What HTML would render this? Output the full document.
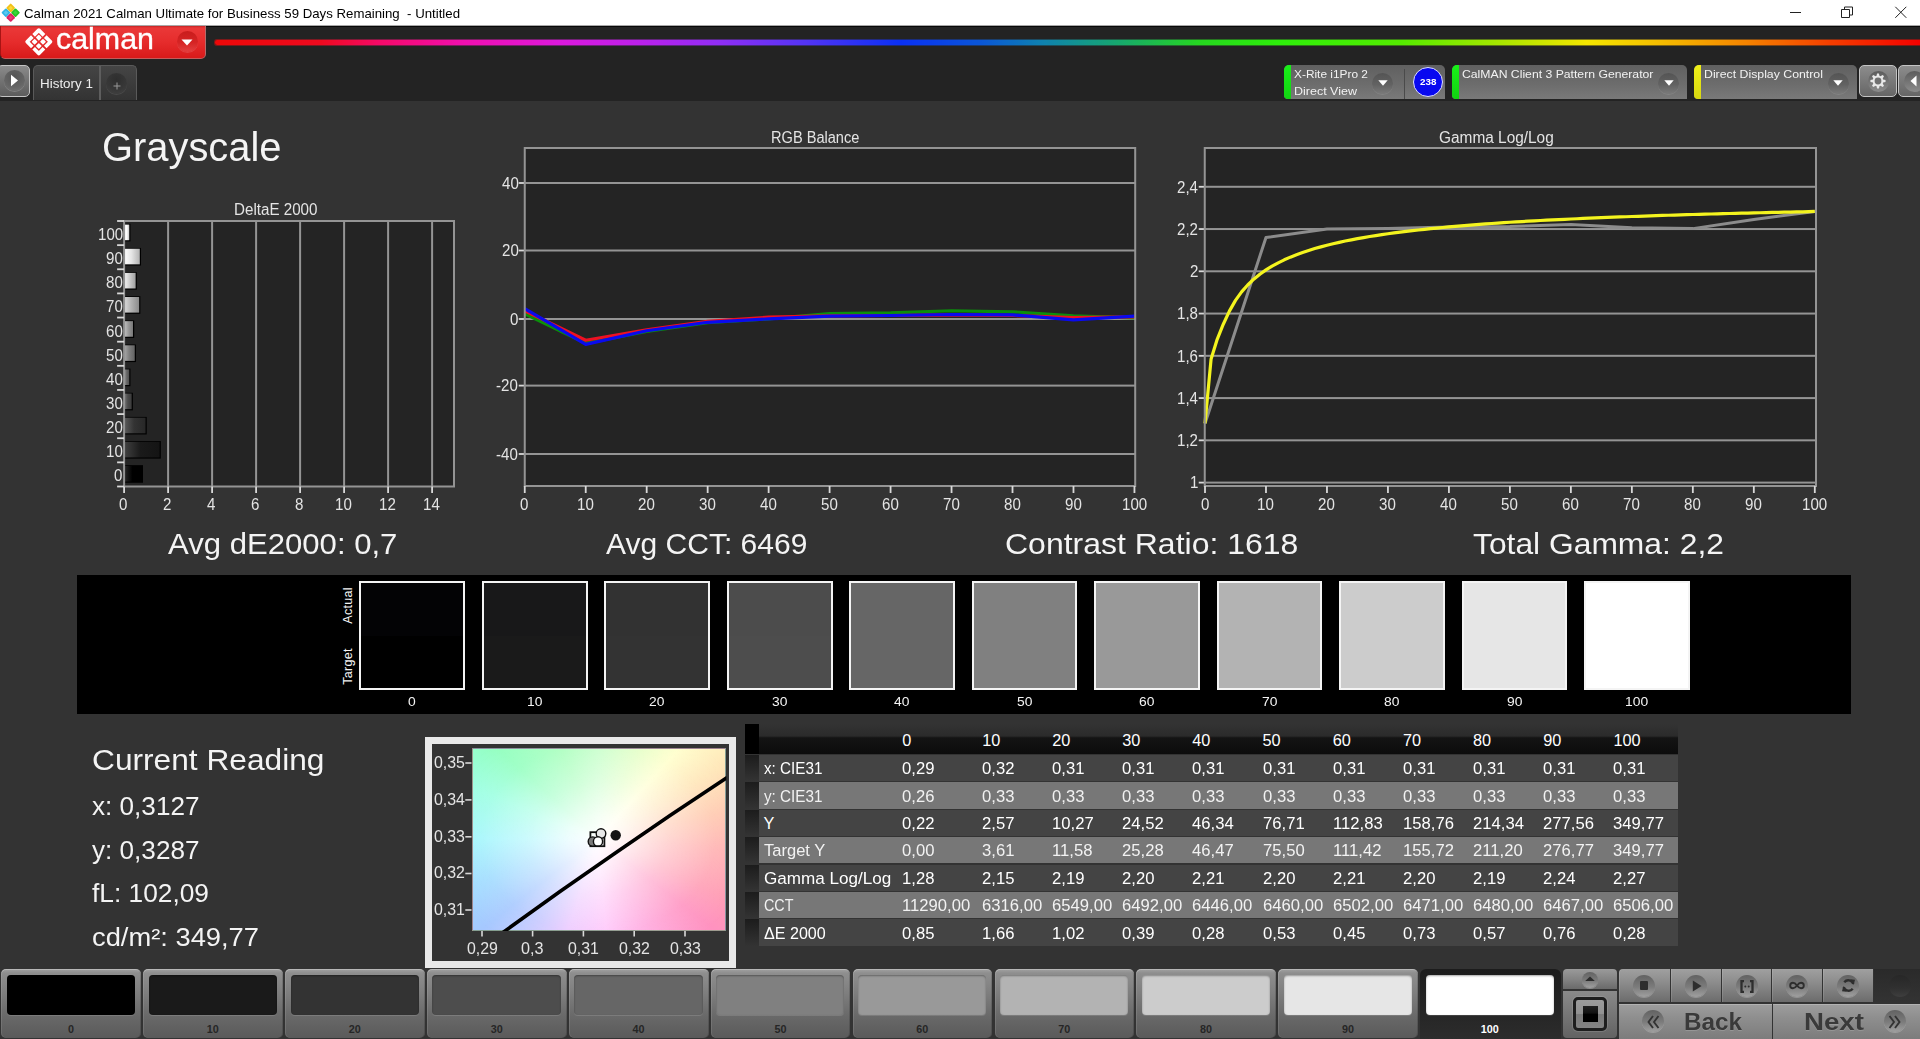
<!DOCTYPE html>
<html lang="en"><head><meta charset="utf-8"><title>Calman 2021 - Grayscale</title>
<style>
html,body{margin:0;padding:0;background:#333;}
body{width:1920px;height:1039px;overflow:hidden;position:relative;font-family:"Liberation Sans",sans-serif;}
#app{position:absolute;left:0;top:0;width:1920px;height:1039px;overflow:hidden;background:#333;}
.b{position:absolute;display:block;}
.t{position:absolute;display:block;white-space:nowrap;font-family:"Liberation Sans",sans-serif;transform-origin:0 50%;}
</style></head>
<body><div id="app">
<!-- title bar + header -->
<div class="b" style="left:0px;top:0px;width:1920px;height:25px;background:#fff;"></div>
<svg class="b" style="left:0px;top:2px" width="22" height="22" viewBox="0 0 22 22">
<g transform="translate(10.700 10.700) rotate(45) scale(1.04)">
<rect x="-6.400" y="-6.400" width="6.300" height="6.300" rx=".9" fill="#f2c218"/>
<rect x="0.100" y="-6.400" width="6.300" height="6.300" rx=".9" fill="#25c425"/>
<rect x="-6.400" y="0.100" width="6.300" height="6.300" rx=".9" fill="#32b4e6"/>
<rect x="0.100" y="0.100" width="6.300" height="6.300" rx=".9" fill="#de2362"/>
<rect x="-4.800" y="-4.800" width="3.100" height="3.100" fill="#ffe04a" opacity=".7"/>
<rect x="1.700" y="-4.800" width="3.100" height="3.100" fill="#4be04b" opacity=".6"/>
<rect x="-4.800" y="1.700" width="3.100" height="3.100" fill="#6ad2f6" opacity=".7"/>
<rect x="1.700" y="1.700" width="3.100" height="3.100" fill="#f04c86" opacity=".6"/>
</g></svg>
<span class="t" style="left:23.5px;top:6.2px;font-size:13px;line-height:16px;color:#000;transform:scaleX(1.0176);white-space:pre;">Calman 2021 Calman Ultimate for Business 59 Days Remaining  - Untitled</span>
<svg class="b" style="left:1760px;top:0" width="160" height="25" viewBox="0 0 160 25" fill="none" stroke="#222" stroke-width="1">
<path d="M30 12.5H41"/>
<path d="M81.5 9.5h8v8h-8z"/><path d="M84.5 9.5v-2.500h8v8h-3"/>
<path d="M135.300 6.800l11 11M146.300 6.800l-11 11"/>
</svg>
<div class="b" style="left:0px;top:25px;width:1920px;height:1px;background:#a8a8a8;"></div>
<div class="b" style="left:0px;top:26px;width:1920px;height:74.5px;background:#232323;border-top:1px solid #080808;box-sizing:border-box;"></div>
<div class="b" style="left:214.3px;top:39.3px;width:1712px;height:6.6px;background:linear-gradient(90deg,#f80808 0.00%,#f80a20 6.19%,#ff0a6e 9.70%,#fa10b4 14.37%,#e41ae6 20.21%,#c222f5 24.88%,#9430ff 29.56%,#5a36ff 34.23%,#0a32ff 40.07%,#0a5ae0 44.74%,#1086b8 48.25%,#18b070 52.92%,#28e020 57.59%,#30f80a 62.27%,#58f400 69.28%,#b0f000 75.12%,#fff000 80.14%,#ffc400 84.46%,#ff8c00 89.19%,#ff4000 94.39%,#ff0000 99.65%);border-radius:3px 0 0 3px;opacity:.42;"></div>
<div class="b" style="left:214.8px;top:40.2px;width:1712px;height:4.8px;background:linear-gradient(90deg,#f80808 0.00%,#f80a20 6.19%,#ff0a6e 9.70%,#fa10b4 14.37%,#e41ae6 20.21%,#c222f5 24.88%,#9430ff 29.56%,#5a36ff 34.23%,#0a32ff 40.07%,#0a5ae0 44.74%,#1086b8 48.25%,#18b070 52.92%,#28e020 57.59%,#30f80a 62.27%,#58f400 69.28%,#b0f000 75.12%,#fff000 80.14%,#ffc400 84.46%,#ff8c00 89.19%,#ff4000 94.39%,#ff0000 99.65%);border-radius:2.400px 0 0 2.400px;filter:brightness(.96);"></div>
<div class="b" style="left:0px;top:26px;width:206.3px;height:33.2px;background:linear-gradient(180deg,#c42424 0,#ea3838 6%,#e62c2c 50%,#d81a1a 100%);border-radius:0 0 5px 5px;border:1px solid #a81414;border-right-color:#b46a6a;border-bottom-color:#c45a5a;border-top:none;box-sizing:border-box;"></div>
<svg class="b" style="left:24px;top:27px" width="30" height="30" viewBox="-15 -15 30 30">
<g transform="translate(-.2 -.2) rotate(45) scale(1.16)">
<g fill="none" stroke="#fff" stroke-width="3.200" stroke-linejoin="round">
<path d="M-7.100-.8V-7.100H-.8"/><path d="M7.100-.8V-7.100H.8"/><path d="M-7.100.8V7.100H-.8"/><path d="M7.100.8V7.100H.8"/>
</g>
<g fill="#fff">
<rect x="-4.400" y="-4.400" width="3.700" height="3.700" rx=".6"/><rect x=".7" y="-4.400" width="3.700" height="3.700" rx=".6"/>
<rect x="-4.400" y=".7" width="3.700" height="3.700" rx=".6"/><rect x=".7" y=".7" width="3.700" height="3.700" rx=".6"/>
</g></g></svg>
<span class="t" style="left:55.6px;top:21px;font-size:30px;line-height:36px;color:#fff;transform:scaleX(1.0133);-webkit-text-stroke:.35px #fff;">calman</span>
<div class="b" style="left:176.5px;top:31px;width:21px;height:21px;border-radius:50%;background:linear-gradient(180deg,#c81c1c 0,#d62424 55%,#e44040 100%);box-shadow:0 1px 0 rgba(255,255,255,.14);"></div>
<svg class="b" style="left:181px;top:38.500px" width="12" height="7" viewBox="0 0 12 7"><path d="M.5.5h11L6 6.500z" fill="#fff"/></svg>
<div class="b" style="left:-3px;top:65px;width:33.3px;height:31.6px;border-radius:5px;border:1.800px solid #c4c4c4;background:linear-gradient(180deg,#8a8a8a,#5c5c5c);box-sizing:border-box;"></div>
<div class="b" style="left:4px;top:70px;width:21px;height:21px;border-radius:50%;background:radial-gradient(circle at 50% 30%,#555 0,#666 60%,#7a7a7a 100%);box-shadow:0 1px 0 rgba(255,255,255,.2);"></div>
<svg class="b" style="left:10px;top:74px" width="9" height="13" viewBox="0 0 9 13"><path d="M1 .8L8 6.500 1 12.200z" fill="#fff"/></svg>
<div class="b" style="left:33px;top:65px;width:104px;height:35px;border-radius:5px 5px 0 0;border:1px solid #5a5a5a;border-bottom:none;background:linear-gradient(180deg,#454545,#333);box-sizing:border-box;"></div>
<div class="b" style="left:99px;top:66px;width:1.5px;height:34px;background:#5e5e5e;"></div>
<span class="t" style="left:40px;top:75.5px;font-size:13.2px;line-height:16px;color:#eee;transform:scaleX(1.0177);">History 1</span>
<div class="b" style="left:106px;top:72.5px;width:21px;height:21px;border-radius:50%;background:radial-gradient(circle at 50% 30%,#2e2e2e 0,#383838 60%,#444 100%);box-shadow:0 1px 0 rgba(255,255,255,.10);"></div>
<svg class="b" style="left:112.500px;top:81.500px" width="8" height="8" viewBox="0 0 8 8"><path d="M4 .5v7M.5 4h7" stroke="#999" stroke-width="1" fill="none"/></svg>
<div class="b" style="left:1284px;top:65px;width:161px;height:34px;border-radius:5px 5px 0 4px;background:linear-gradient(180deg,#606060 0,#6c6c6c 55%,#797979 100%);overflow:hidden;"><div class="b" style="left:0;top:0;width:6.900px;height:34px;background:linear-gradient(180deg,#18f018,#12d412)"></div></div>
<div class="b" style="left:1372px;top:72.5px;width:21px;height:21px;border-radius:50%;background:linear-gradient(180deg,#545454 0,#626262 55%,#7a7a7a 100%);box-shadow:0 1px 0 rgba(255,255,255,.10);"></div>
<svg class="b" style="left:1377.5px;top:80px" width="10" height="6" viewBox="0 0 10 6"><path d="M.3.300h9.400L5 5.800z" fill="#fff"/></svg>
<div class="b" style="left:1404.3px;top:69px;width:1.2px;height:30px;background:#4a4a4a;"></div>
<span class="t" style="left:1293.5px;top:67.4px;font-size:11.6px;line-height:14px;color:#f2f2f2;transform:scaleX(1.0248);">X-Rite i1Pro 2</span>
<span class="t" style="left:1293.5px;top:84.2px;font-size:11.6px;line-height:14px;color:#f2f2f2;transform:scaleX(1.0779);">Direct View</span>
<div class="b" style="left:1413px;top:67px;width:30px;height:30px;border-radius:50%;background:#0808f0;border:1.900px solid #dedeff;box-sizing:border-box;"></div>
<span class="t" style="left:1419.8px;top:76.1px;font-size:9.8px;line-height:12px;color:#fff;transform:scaleX(1.0030);font-weight:bold;">238</span>
<div class="b" style="left:1452px;top:65px;width:235px;height:34px;border-radius:5px 5px 0 4px;background:linear-gradient(180deg,#606060 0,#6c6c6c 55%,#797979 100%);overflow:hidden;"><div class="b" style="left:0;top:0;width:6.900px;height:34px;background:linear-gradient(180deg,#18f018,#12d412)"></div></div>
<div class="b" style="left:1658.2px;top:72.5px;width:21px;height:21px;border-radius:50%;background:linear-gradient(180deg,#545454 0,#626262 55%,#7a7a7a 100%);box-shadow:0 1px 0 rgba(255,255,255,.10);"></div>
<svg class="b" style="left:1663.7px;top:80px" width="10" height="6" viewBox="0 0 10 6"><path d="M.3.300h9.400L5 5.800z" fill="#fff"/></svg>
<span class="t" style="left:1462.3px;top:67.4px;font-size:11.6px;line-height:14px;color:#f2f2f2;transform:scaleX(1.0533);">CalMAN Client 3 Pattern Generator</span>
<div class="b" style="left:1694px;top:65px;width:162.5px;height:34px;border-radius:5px 5px 0 4px;background:linear-gradient(180deg,#606060 0,#6c6c6c 55%,#797979 100%);overflow:hidden;"><div class="b" style="left:0;top:0;width:6.900px;height:34px;background:linear-gradient(180deg,#f0f018,#d8d810)"></div></div>
<div class="b" style="left:1827.5px;top:72.5px;width:21px;height:21px;border-radius:50%;background:linear-gradient(180deg,#545454 0,#626262 55%,#7a7a7a 100%);box-shadow:0 1px 0 rgba(255,255,255,.10);"></div>
<svg class="b" style="left:1833.0px;top:80px" width="10" height="6" viewBox="0 0 10 6"><path d="M.3.300h9.400L5 5.800z" fill="#fff"/></svg>
<span class="t" style="left:1704.3px;top:67.4px;font-size:11.6px;line-height:14px;color:#f2f2f2;transform:scaleX(1.0609);">Direct Display Control</span>
<div class="b" style="left:1859.3px;top:65px;width:37.7px;height:32px;border-radius:5px;border:1.5px solid #c4c4c4;background:linear-gradient(180deg,#8c8c8c,#666);box-sizing:border-box;"></div>
<div class="b" style="left:1867.9px;top:70.5px;width:21px;height:21px;border-radius:50%;background:linear-gradient(180deg,#5c5c5c,#8c8c8c);"></div>
<svg class="b" style="left:1870.400px;top:73px" width="16" height="16" viewBox="-8 -8 16 16"><polygon points="-1.57,-5.06 -0.91,-7.55 0.91,-7.55 1.57,-5.06 2.47,-4.69 4.69,-5.98 5.98,-4.69 4.69,-2.47 5.06,-1.57 7.55,-0.91 7.55,0.91 5.06,1.57 4.69,2.47 5.98,4.69 4.69,5.98 2.47,4.69 1.57,5.06 0.91,7.55 -0.91,7.55 -1.57,5.06 -2.47,4.69 -4.69,5.98 -5.98,4.69 -4.69,2.47 -5.06,1.57 -7.55,0.91 -7.55,-0.91 -5.06,-1.57 -4.69,-2.47 -5.98,-4.69 -4.69,-5.98 -2.47,-4.69" fill="#e8e8e8"/><circle r="5.100" fill="#e8e8e8"/><circle r="3.400" fill="#707070"/></svg>
<div class="b" style="left:1898.4px;top:65px;width:30px;height:32px;border-radius:5px;border:1.5px solid #c4c4c4;background:linear-gradient(180deg,#8c8c8c,#666);box-sizing:border-box;"></div>
<div class="b" style="left:1904.4px;top:70.5px;width:21px;height:21px;border-radius:50%;background:linear-gradient(180deg,#5c5c5c,#8c8c8c);"></div>
<svg class="b" style="left:1910px;top:74.500px" width="7" height="12" viewBox="0 0 7 12"><path d="M6.500.5v11L.5 6z" fill="#fff"/></svg>
<!-- charts -->
<span class="t" style="left:101.5px;top:123.3px;font-size:40.4px;line-height:49px;color:#f4f4f4;transform:scaleX(0.9870);">Grayscale</span>
<svg class="b" style="left:100px;top:200px" width="380" height="300" viewBox="100 200 380 300"><defs><linearGradient id="bg100" x1="0" x2="1" y1="0" y2="0"><stop offset="0" stop-color="rgb(255,255,255)"/><stop offset=".45" stop-color="rgb(255,255,255)"/><stop offset="1" stop-color="rgb(198,198,198)"/></linearGradient><linearGradient id="bg90" x1="0" x2="1" y1="0" y2="0"><stop offset="0" stop-color="rgb(255,255,255)"/><stop offset=".45" stop-color="rgb(229,229,229)"/><stop offset="1" stop-color="rgb(178,178,178)"/></linearGradient><linearGradient id="bg80" x1="0" x2="1" y1="0" y2="0"><stop offset="0" stop-color="rgb(242,242,242)"/><stop offset=".45" stop-color="rgb(204,204,204)"/><stop offset="1" stop-color="rgb(159,159,159)"/></linearGradient><linearGradient id="bg70" x1="0" x2="1" y1="0" y2="0"><stop offset="0" stop-color="rgb(216,216,216)"/><stop offset=".45" stop-color="rgb(178,178,178)"/><stop offset="1" stop-color="rgb(138,138,138)"/></linearGradient><linearGradient id="bg60" x1="0" x2="1" y1="0" y2="0"><stop offset="0" stop-color="rgb(191,191,191)"/><stop offset=".45" stop-color="rgb(153,153,153)"/><stop offset="1" stop-color="rgb(119,119,119)"/></linearGradient><linearGradient id="bg50" x1="0" x2="1" y1="0" y2="0"><stop offset="0" stop-color="rgb(165,165,165)"/><stop offset=".45" stop-color="rgb(127,127,127)"/><stop offset="1" stop-color="rgb(99,99,99)"/></linearGradient><linearGradient id="bg40" x1="0" x2="1" y1="0" y2="0"><stop offset="0" stop-color="rgb(140,140,140)"/><stop offset=".45" stop-color="rgb(102,102,102)"/><stop offset="1" stop-color="rgb(79,79,79)"/></linearGradient><linearGradient id="bg30" x1="0" x2="1" y1="0" y2="0"><stop offset="0" stop-color="rgb(114,114,114)"/><stop offset=".45" stop-color="rgb(76,76,76)"/><stop offset="1" stop-color="rgb(59,59,59)"/></linearGradient><linearGradient id="bg20" x1="0" x2="1" y1="0" y2="0"><stop offset="0" stop-color="rgb(89,89,89)"/><stop offset=".45" stop-color="rgb(51,51,51)"/><stop offset="1" stop-color="rgb(39,39,39)"/></linearGradient><linearGradient id="bg10" x1="0" x2="1" y1="0" y2="0"><stop offset="0" stop-color="rgb(64,64,64)"/><stop offset=".45" stop-color="rgb(26,26,26)"/><stop offset="1" stop-color="rgb(20,20,20)"/></linearGradient><linearGradient id="bg0" x1="0" x2="1" y1="0" y2="0"><stop offset="0" stop-color="rgb(38,38,38)"/><stop offset=".45" stop-color="rgb(0,0,0)"/><stop offset="1" stop-color="rgb(0,0,0)"/></linearGradient></defs><rect x="124.1" y="221.0" width="329.9" height="265.5" fill="#242424"/><rect x="167.10" y="221.0" width="2" height="265.5" fill="#949494"/><rect x="211.10" y="221.0" width="2" height="265.5" fill="#949494"/><rect x="255.10" y="221.0" width="2" height="265.5" fill="#949494"/><rect x="299.10" y="221.0" width="2" height="265.5" fill="#949494"/><rect x="343.10" y="221.0" width="2" height="265.5" fill="#949494"/><rect x="387.10" y="221.0" width="2" height="265.5" fill="#949494"/><rect x="431.10" y="221.0" width="2" height="265.5" fill="#949494"/><rect x="124.70" y="223.80" width="5.76" height="17.6" fill="#000"/><rect x="124.70" y="224.60" width="4.56" height="15.6" fill="url(#bg100)"/><rect x="124.70" y="247.94" width="16.32" height="17.6" fill="#000"/><rect x="124.70" y="248.74" width="15.12" height="15.6" fill="url(#bg90)"/><rect x="124.70" y="272.07" width="12.14" height="17.6" fill="#000"/><rect x="124.70" y="272.87" width="10.94" height="15.6" fill="url(#bg80)"/><rect x="124.70" y="296.21" width="15.66" height="17.6" fill="#000"/><rect x="124.70" y="297.01" width="14.46" height="15.6" fill="url(#bg70)"/><rect x="124.70" y="320.35" width="9.50" height="17.6" fill="#000"/><rect x="124.70" y="321.15" width="8.30" height="15.6" fill="url(#bg60)"/><rect x="124.70" y="344.48" width="11.26" height="17.6" fill="#000"/><rect x="124.70" y="345.28" width="10.06" height="15.6" fill="url(#bg50)"/><rect x="124.70" y="368.62" width="5.76" height="17.6" fill="#000"/><rect x="124.70" y="369.42" width="4.56" height="15.6" fill="url(#bg40)"/><rect x="124.70" y="392.75" width="8.18" height="17.6" fill="#000"/><rect x="124.70" y="393.55" width="6.98" height="15.6" fill="url(#bg30)"/><rect x="124.70" y="416.89" width="22.04" height="17.6" fill="#000"/><rect x="124.70" y="417.69" width="20.84" height="15.6" fill="url(#bg20)"/><rect x="124.70" y="441.03" width="36.12" height="17.6" fill="#000"/><rect x="124.70" y="441.83" width="34.92" height="15.6" fill="url(#bg10)"/><rect x="124.70" y="465.16" width="18.30" height="17.6" fill="#000"/><rect x="124.70" y="465.96" width="17.10" height="15.6" fill="url(#bg0)"/><path d="M124.1 221.0H454.0V486.5H124.1Z" fill="none" stroke="#949494" stroke-width="2"/><rect x="117.1" y="220.10" width="7" height="1.800" fill="#d8d8d8"/><rect x="117.1" y="244.24" width="7" height="1.800" fill="#d8d8d8"/><rect x="117.1" y="268.37" width="7" height="1.800" fill="#d8d8d8"/><rect x="117.1" y="292.51" width="7" height="1.800" fill="#d8d8d8"/><rect x="117.1" y="316.65" width="7" height="1.800" fill="#d8d8d8"/><rect x="117.1" y="340.78" width="7" height="1.800" fill="#d8d8d8"/><rect x="117.1" y="364.92" width="7" height="1.800" fill="#d8d8d8"/><rect x="117.1" y="389.05" width="7" height="1.800" fill="#d8d8d8"/><rect x="117.1" y="413.19" width="7" height="1.800" fill="#d8d8d8"/><rect x="117.1" y="437.33" width="7" height="1.800" fill="#d8d8d8"/><rect x="117.1" y="461.46" width="7" height="1.800" fill="#d8d8d8"/><rect x="117.1" y="485.60" width="7" height="1.800" fill="#d8d8d8"/><rect x="123.20" y="486.5" width="1.800" height="6.500" fill="#d8d8d8"/><rect x="167.20" y="486.5" width="1.800" height="6.500" fill="#d8d8d8"/><rect x="211.20" y="486.5" width="1.800" height="6.500" fill="#d8d8d8"/><rect x="255.20" y="486.5" width="1.800" height="6.500" fill="#d8d8d8"/><rect x="299.20" y="486.5" width="1.800" height="6.500" fill="#d8d8d8"/><rect x="343.20" y="486.5" width="1.800" height="6.500" fill="#d8d8d8"/><rect x="387.20" y="486.5" width="1.800" height="6.500" fill="#d8d8d8"/><rect x="431.20" y="486.5" width="1.800" height="6.500" fill="#d8d8d8"/></svg>
<span class="t" style="left:97.61px;top:224.97px;font-size:15.7px;line-height:19px;color:#e4e4e4;transform:scaleX(0.9618);">100</span>
<span class="t" style="left:106px;top:249.1px;font-size:15.7px;line-height:19px;color:#e4e4e4;transform:scaleX(0.9618);">90</span>
<span class="t" style="left:106px;top:273.24px;font-size:15.7px;line-height:19px;color:#e4e4e4;transform:scaleX(0.9618);">80</span>
<span class="t" style="left:106px;top:297.38px;font-size:15.7px;line-height:19px;color:#e4e4e4;transform:scaleX(0.9618);">70</span>
<span class="t" style="left:106px;top:321.51px;font-size:15.7px;line-height:19px;color:#e4e4e4;transform:scaleX(0.9618);">60</span>
<span class="t" style="left:106px;top:345.65px;font-size:15.7px;line-height:19px;color:#e4e4e4;transform:scaleX(0.9618);">50</span>
<span class="t" style="left:106px;top:369.79px;font-size:15.7px;line-height:19px;color:#e4e4e4;transform:scaleX(0.9618);">40</span>
<span class="t" style="left:106px;top:393.92px;font-size:15.7px;line-height:19px;color:#e4e4e4;transform:scaleX(0.9618);">30</span>
<span class="t" style="left:106px;top:418.06px;font-size:15.7px;line-height:19px;color:#e4e4e4;transform:scaleX(0.9618);">20</span>
<span class="t" style="left:106px;top:442.2px;font-size:15.7px;line-height:19px;color:#e4e4e4;transform:scaleX(0.9618);">10</span>
<span class="t" style="left:114.4px;top:466.33px;font-size:15.7px;line-height:19px;color:#e4e4e4;transform:scaleX(0.9618);">0</span>
<span class="t" style="left:119.4px;top:495.2px;font-size:15.7px;line-height:19px;color:#e4e4e4;transform:scaleX(0.9618);">0</span>
<span class="t" style="left:163.4px;top:495.2px;font-size:15.7px;line-height:19px;color:#e4e4e4;transform:scaleX(0.9618);">2</span>
<span class="t" style="left:207.4px;top:495.2px;font-size:15.7px;line-height:19px;color:#e4e4e4;transform:scaleX(0.9618);">4</span>
<span class="t" style="left:251.4px;top:495.2px;font-size:15.7px;line-height:19px;color:#e4e4e4;transform:scaleX(0.9618);">6</span>
<span class="t" style="left:295.4px;top:495.2px;font-size:15.7px;line-height:19px;color:#e4e4e4;transform:scaleX(0.9618);">8</span>
<span class="t" style="left:335.2px;top:495.2px;font-size:15.7px;line-height:19px;color:#e4e4e4;transform:scaleX(0.9618);">10</span>
<span class="t" style="left:379.2px;top:495.2px;font-size:15.7px;line-height:19px;color:#e4e4e4;transform:scaleX(0.9618);">12</span>
<span class="t" style="left:423.2px;top:495.2px;font-size:15.7px;line-height:19px;color:#e4e4e4;transform:scaleX(0.9618);">14</span>
<span class="t" style="left:234.25px;top:200.2px;font-size:15.6px;line-height:19px;color:#e4e4e4;transform:scaleX(0.9725);">DeltaE 2000</span>
<svg class="b" style="left:495px;top:140px" width="660" height="360" viewBox="495 140 660 360"><rect x="524.75" y="148.0" width="610.5" height="338.0" fill="#242424"/><rect x="524.75" y="182.00" width="610.5" height="2" fill="#949494"/><rect x="518.75" y="182.10" width="6" height="1.800" fill="#d8d8d8"/><rect x="524.75" y="249.50" width="610.5" height="2" fill="#949494"/><rect x="518.75" y="249.60" width="6" height="1.800" fill="#d8d8d8"/><rect x="524.75" y="318.00" width="610.5" height="2" fill="#949494"/><rect x="518.75" y="318.10" width="6" height="1.800" fill="#d8d8d8"/><rect x="524.75" y="384.60" width="610.5" height="2" fill="#949494"/><rect x="518.75" y="384.70" width="6" height="1.800" fill="#d8d8d8"/><rect x="524.75" y="453.00" width="610.5" height="2" fill="#949494"/><rect x="518.75" y="453.10" width="6" height="1.800" fill="#d8d8d8"/><polyline points="524.75,313.81 585.72,343.31 646.69,331.44 707.66,322.63 768.63,318.90 829.60,313.48 890.57,312.80 951.54,310.76 1012.51,311.78 1073.48,315.85 1134.45,317.88" fill="none" stroke="#0b8f0b" stroke-width="3.200" stroke-linejoin="round"/><polyline points="524.75,310.76 585.72,340.26 646.69,329.75 707.66,321.27 768.63,317.20 829.60,315.85 890.57,315.51 951.54,314.83 1012.51,315.51 1073.48,317.54 1134.45,316.87" fill="none" stroke="#ee1122" stroke-width="3.200" stroke-linejoin="round"/><polyline points="524.75,308.73 585.72,344.32 646.69,330.76 707.66,322.29 768.63,318.90 829.60,316.19 890.57,315.51 951.54,314.49 1012.51,314.83 1073.48,319.92 1134.45,316.19" fill="none" stroke="#0a0aee" stroke-width="3.200" stroke-linejoin="round"/><path d="M524.75 148.0H1135.20V486.0H524.75Z" fill="none" stroke="#949494" stroke-width="2"/><rect x="523.85" y="486.0" width="1.800" height="7" fill="#d8d8d8"/><rect x="584.82" y="486.0" width="1.800" height="7" fill="#d8d8d8"/><rect x="645.79" y="486.0" width="1.800" height="7" fill="#d8d8d8"/><rect x="706.76" y="486.0" width="1.800" height="7" fill="#d8d8d8"/><rect x="767.73" y="486.0" width="1.800" height="7" fill="#d8d8d8"/><rect x="828.70" y="486.0" width="1.800" height="7" fill="#d8d8d8"/><rect x="889.67" y="486.0" width="1.800" height="7" fill="#d8d8d8"/><rect x="950.64" y="486.0" width="1.800" height="7" fill="#d8d8d8"/><rect x="1011.61" y="486.0" width="1.800" height="7" fill="#d8d8d8"/><rect x="1072.58" y="486.0" width="1.800" height="7" fill="#d8d8d8"/><rect x="1133.55" y="486.0" width="1.800" height="7" fill="#d8d8d8"/></svg>
<span class="t" style="left:501.5px;top:173.5px;font-size:15.7px;line-height:19px;color:#e4e4e4;transform:scaleX(0.9618);">40</span>
<span class="t" style="left:501.5px;top:241px;font-size:15.7px;line-height:19px;color:#e4e4e4;transform:scaleX(0.9618);">20</span>
<span class="t" style="left:509.9px;top:309.5px;font-size:15.7px;line-height:19px;color:#e4e4e4;transform:scaleX(0.9618);">0</span>
<span class="t" style="left:496.47px;top:376.1px;font-size:15.7px;line-height:19px;color:#e4e4e4;transform:scaleX(0.9618);">-20</span>
<span class="t" style="left:496.47px;top:444.5px;font-size:15.7px;line-height:19px;color:#e4e4e4;transform:scaleX(0.9618);">-40</span>
<span class="t" style="left:520.25px;top:495.2px;font-size:15.7px;line-height:19px;color:#e4e4e4;transform:scaleX(0.9618);">0</span>
<span class="t" style="left:577.02px;top:495.2px;font-size:15.7px;line-height:19px;color:#e4e4e4;transform:scaleX(0.9618);">10</span>
<span class="t" style="left:637.99px;top:495.2px;font-size:15.7px;line-height:19px;color:#e4e4e4;transform:scaleX(0.9618);">20</span>
<span class="t" style="left:698.96px;top:495.2px;font-size:15.7px;line-height:19px;color:#e4e4e4;transform:scaleX(0.9618);">30</span>
<span class="t" style="left:759.93px;top:495.2px;font-size:15.7px;line-height:19px;color:#e4e4e4;transform:scaleX(0.9618);">40</span>
<span class="t" style="left:820.9px;top:495.2px;font-size:15.7px;line-height:19px;color:#e4e4e4;transform:scaleX(0.9618);">50</span>
<span class="t" style="left:881.87px;top:495.2px;font-size:15.7px;line-height:19px;color:#e4e4e4;transform:scaleX(0.9618);">60</span>
<span class="t" style="left:942.84px;top:495.2px;font-size:15.7px;line-height:19px;color:#e4e4e4;transform:scaleX(0.9618);">70</span>
<span class="t" style="left:1003.81px;top:495.2px;font-size:15.7px;line-height:19px;color:#e4e4e4;transform:scaleX(0.9618);">80</span>
<span class="t" style="left:1064.78px;top:495.2px;font-size:15.7px;line-height:19px;color:#e4e4e4;transform:scaleX(0.9618);">90</span>
<span class="t" style="left:1121.55px;top:495.2px;font-size:15.7px;line-height:19px;color:#e4e4e4;transform:scaleX(0.9618);">100</span>
<span class="t" style="left:771.2px;top:128.2px;font-size:15.6px;line-height:19px;color:#e4e4e4;transform:scaleX(0.9353);">RGB Balance</span>
<svg class="b" style="left:1170px;top:140px" width="670" height="360" viewBox="1170 140 670 360"><rect x="1204.75" y="148.0" width="611.2" height="338.0" fill="#242424"/><rect x="1204.75" y="481.60" width="611.2" height="2" fill="#949494"/><rect x="1198.75" y="481.70" width="6" height="1.800" fill="#d8d8d8"/><rect x="1204.75" y="439.34" width="611.2" height="2" fill="#949494"/><rect x="1198.75" y="439.44" width="6" height="1.800" fill="#d8d8d8"/><rect x="1204.75" y="397.08" width="611.2" height="2" fill="#949494"/><rect x="1198.75" y="397.18" width="6" height="1.800" fill="#d8d8d8"/><rect x="1204.75" y="354.82" width="611.2" height="2" fill="#949494"/><rect x="1198.75" y="354.92" width="6" height="1.800" fill="#d8d8d8"/><rect x="1204.75" y="312.56" width="611.2" height="2" fill="#949494"/><rect x="1198.75" y="312.66" width="6" height="1.800" fill="#d8d8d8"/><rect x="1204.75" y="270.30" width="611.2" height="2" fill="#949494"/><rect x="1198.75" y="270.40" width="6" height="1.800" fill="#d8d8d8"/><rect x="1204.75" y="228.04" width="611.2" height="2" fill="#949494"/><rect x="1198.75" y="228.14" width="6" height="1.800" fill="#d8d8d8"/><rect x="1204.75" y="185.78" width="611.2" height="2" fill="#949494"/><rect x="1198.75" y="185.88" width="6" height="1.800" fill="#d8d8d8"/><polyline points="1205.00,423.44 1265.98,237.49 1326.96,229.04 1387.94,228.62 1448.92,226.93 1509.90,226.50 1570.88,224.39 1631.86,227.77 1692.84,228.62 1753.82,219.53 1814.80,211.50" fill="none" stroke="#8c8c8c" stroke-width="3" stroke-linejoin="round"/><polyline points="1205.00,423.44 1211.10,358.90 1217.20,339.28 1223.29,324.22 1229.39,311.15 1235.49,300.38 1241.59,291.90 1247.69,284.97 1253.78,279.16 1259.88,274.21 1265.98,269.92 1272.08,266.16 1278.18,262.82 1284.27,259.83 1290.37,257.14 1296.47,254.71 1302.57,252.48 1308.67,250.45 1314.76,248.57 1320.86,246.84 1326.96,245.23 1333.06,243.73 1339.16,242.34 1345.25,241.03 1351.35,239.81 1357.45,238.65 1363.55,237.57 1369.65,236.54 1375.74,235.57 1381.84,234.65 1387.94,233.78 1394.04,232.94 1400.14,232.15 1406.23,231.40 1412.33,230.67 1418.43,229.98 1424.53,229.32 1430.63,228.69 1436.72,228.08 1442.82,227.49 1448.92,226.93 1455.02,226.39 1461.12,225.86 1467.21,225.36 1473.31,224.87 1479.41,224.40 1485.51,223.95 1491.61,223.51 1497.70,223.08 1503.80,222.67 1509.90,222.27 1516.00,221.90 1522.10,221.54 1528.19,221.19 1534.29,220.85 1540.39,220.52 1546.49,220.20 1552.59,219.89 1558.68,219.59 1564.78,219.29 1570.88,219.01 1576.98,218.73 1583.08,218.46 1589.17,218.19 1595.27,217.93 1601.37,217.68 1607.47,217.43 1613.57,217.19 1619.66,216.96 1625.76,216.73 1631.86,216.51 1637.96,216.29 1644.06,216.07 1650.15,215.86 1656.25,215.66 1662.35,215.46 1668.45,215.26 1674.55,215.07 1680.64,214.88 1686.74,214.70 1692.84,214.52 1698.94,214.34 1705.04,214.17 1711.13,214.00 1717.23,213.83 1723.33,213.67 1729.43,213.50 1735.53,213.35 1741.62,213.19 1747.72,213.04 1753.82,212.89 1759.92,212.74 1766.02,212.60 1772.11,212.46 1778.21,212.32 1784.31,212.18 1790.41,212.04 1796.51,211.91 1802.60,211.78 1808.70,211.65 1814.80,211.40" fill="none" stroke="#f4f41e" stroke-width="3.200" stroke-linejoin="round"/><path d="M1204.75 148.0H1816.00V486.0H1204.75Z" fill="none" stroke="#949494" stroke-width="2"/><rect x="1204.10" y="486.0" width="1.800" height="7" fill="#d8d8d8"/><rect x="1265.08" y="486.0" width="1.800" height="7" fill="#d8d8d8"/><rect x="1326.06" y="486.0" width="1.800" height="7" fill="#d8d8d8"/><rect x="1387.04" y="486.0" width="1.800" height="7" fill="#d8d8d8"/><rect x="1448.02" y="486.0" width="1.800" height="7" fill="#d8d8d8"/><rect x="1509.00" y="486.0" width="1.800" height="7" fill="#d8d8d8"/><rect x="1569.98" y="486.0" width="1.800" height="7" fill="#d8d8d8"/><rect x="1630.96" y="486.0" width="1.800" height="7" fill="#d8d8d8"/><rect x="1691.94" y="486.0" width="1.800" height="7" fill="#d8d8d8"/><rect x="1752.92" y="486.0" width="1.800" height="7" fill="#d8d8d8"/><rect x="1813.90" y="486.0" width="1.800" height="7" fill="#d8d8d8"/></svg>
<span class="t" style="left:1189.9px;top:473.4px;font-size:15.7px;line-height:19px;color:#e4e4e4;transform:scaleX(0.9618);">1</span>
<span class="t" style="left:1177.31px;top:431.14px;font-size:15.7px;line-height:19px;color:#e4e4e4;transform:scaleX(0.9618);">1,2</span>
<span class="t" style="left:1177.31px;top:388.88px;font-size:15.7px;line-height:19px;color:#e4e4e4;transform:scaleX(0.9618);">1,4</span>
<span class="t" style="left:1177.31px;top:346.62px;font-size:15.7px;line-height:19px;color:#e4e4e4;transform:scaleX(0.9618);">1,6</span>
<span class="t" style="left:1177.31px;top:304.36px;font-size:15.7px;line-height:19px;color:#e4e4e4;transform:scaleX(0.9618);">1,8</span>
<span class="t" style="left:1189.9px;top:262.1px;font-size:15.7px;line-height:19px;color:#e4e4e4;transform:scaleX(0.9618);">2</span>
<span class="t" style="left:1177.31px;top:219.84px;font-size:15.7px;line-height:19px;color:#e4e4e4;transform:scaleX(0.9618);">2,2</span>
<span class="t" style="left:1177.31px;top:177.58px;font-size:15.7px;line-height:19px;color:#e4e4e4;transform:scaleX(0.9618);">2,4</span>
<span class="t" style="left:1200.5px;top:495.2px;font-size:15.7px;line-height:19px;color:#e4e4e4;transform:scaleX(0.9618);">0</span>
<span class="t" style="left:1257.28px;top:495.2px;font-size:15.7px;line-height:19px;color:#e4e4e4;transform:scaleX(0.9618);">10</span>
<span class="t" style="left:1318.26px;top:495.2px;font-size:15.7px;line-height:19px;color:#e4e4e4;transform:scaleX(0.9618);">20</span>
<span class="t" style="left:1379.24px;top:495.2px;font-size:15.7px;line-height:19px;color:#e4e4e4;transform:scaleX(0.9618);">30</span>
<span class="t" style="left:1440.22px;top:495.2px;font-size:15.7px;line-height:19px;color:#e4e4e4;transform:scaleX(0.9618);">40</span>
<span class="t" style="left:1501.2px;top:495.2px;font-size:15.7px;line-height:19px;color:#e4e4e4;transform:scaleX(0.9618);">50</span>
<span class="t" style="left:1562.18px;top:495.2px;font-size:15.7px;line-height:19px;color:#e4e4e4;transform:scaleX(0.9618);">60</span>
<span class="t" style="left:1623.16px;top:495.2px;font-size:15.7px;line-height:19px;color:#e4e4e4;transform:scaleX(0.9618);">70</span>
<span class="t" style="left:1684.14px;top:495.2px;font-size:15.7px;line-height:19px;color:#e4e4e4;transform:scaleX(0.9618);">80</span>
<span class="t" style="left:1745.12px;top:495.2px;font-size:15.7px;line-height:19px;color:#e4e4e4;transform:scaleX(0.9618);">90</span>
<span class="t" style="left:1801.9px;top:495.2px;font-size:15.7px;line-height:19px;color:#e4e4e4;transform:scaleX(0.9618);">100</span>
<span class="t" style="left:1439px;top:128.2px;font-size:15.6px;line-height:19px;color:#e4e4e4;transform:scaleX(0.9879);">Gamma Log/Log</span>
<span class="t" style="left:168px;top:525.7px;font-size:29.2px;line-height:36px;color:#f4f4f4;transform:scaleX(1.0655);">Avg dE2000: 0,7</span>
<span class="t" style="left:606px;top:525.7px;font-size:29.2px;line-height:36px;color:#f4f4f4;transform:scaleX(1.0288);">Avg CCT: 6469</span>
<span class="t" style="left:1005px;top:525.7px;font-size:29.2px;line-height:36px;color:#f4f4f4;transform:scaleX(1.0959);">Contrast Ratio: 1618</span>
<span class="t" style="left:1472.5px;top:525.7px;font-size:29.2px;line-height:36px;color:#f4f4f4;transform:scaleX(1.0892);">Total Gamma: 2,2</span>
<!-- swatches, reading, CIE, table -->
<div class="b" style="left:77px;top:574.5px;width:1774.3px;height:139.8px;background:#000;"></div>
<div class="b" style="left:359.3px;top:581.3px;width:105.8px;height:108.8px;border:2px solid #f4f4f4;box-sizing:border-box;background:linear-gradient(180deg,#030305 0,#030305 50.5%,#000000 50.5%,#000000 100%);"></div>
<span class="t" style="left:408.35px;top:693.6px;font-size:12.6px;line-height:16px;color:#f4f4f4;transform:scaleX(1.1000);">0</span>
<div class="b" style="left:481.78px;top:581.3px;width:105.8px;height:108.8px;border:2px solid #f4f4f4;box-sizing:border-box;background:linear-gradient(180deg,#181819 0,#181819 50.5%,#1a1a1a 50.5%,#1a1a1a 100%);"></div>
<span class="t" style="left:526.97px;top:693.6px;font-size:12.6px;line-height:16px;color:#f4f4f4;transform:scaleX(1.1000);">10</span>
<div class="b" style="left:604.26px;top:581.3px;width:105.8px;height:108.8px;border:2px solid #f4f4f4;box-sizing:border-box;background:linear-gradient(180deg,#323232 0,#323232 50.5%,#333333 50.5%,#333333 100%);"></div>
<span class="t" style="left:649.45px;top:693.6px;font-size:12.6px;line-height:16px;color:#f4f4f4;transform:scaleX(1.1000);">20</span>
<div class="b" style="left:726.74px;top:581.3px;width:105.8px;height:108.8px;border:2px solid #f4f4f4;box-sizing:border-box;background:linear-gradient(180deg,#4c4c4c 0,#4c4c4c 50.5%,#4d4d4d 50.5%,#4d4d4d 100%);"></div>
<span class="t" style="left:771.93px;top:693.6px;font-size:12.6px;line-height:16px;color:#f4f4f4;transform:scaleX(1.1000);">30</span>
<div class="b" style="left:849.22px;top:581.3px;width:105.8px;height:108.8px;border:2px solid #f4f4f4;box-sizing:border-box;background:linear-gradient(180deg,#666666 0,#666666 50.5%,#666666 50.5%,#666666 100%);"></div>
<span class="t" style="left:894.41px;top:693.6px;font-size:12.6px;line-height:16px;color:#f4f4f4;transform:scaleX(1.1000);">40</span>
<div class="b" style="left:971.7px;top:581.3px;width:105.8px;height:108.8px;border:2px solid #f4f4f4;box-sizing:border-box;background:linear-gradient(180deg,#808080 0,#808080 50.5%,#808080 50.5%,#808080 100%);"></div>
<span class="t" style="left:1016.89px;top:693.6px;font-size:12.6px;line-height:16px;color:#f4f4f4;transform:scaleX(1.1000);">50</span>
<div class="b" style="left:1094.18px;top:581.3px;width:105.8px;height:108.8px;border:2px solid #f4f4f4;box-sizing:border-box;background:linear-gradient(180deg,#999999 0,#999999 50.5%,#999999 50.5%,#999999 100%);"></div>
<span class="t" style="left:1139.37px;top:693.6px;font-size:12.6px;line-height:16px;color:#f4f4f4;transform:scaleX(1.1000);">60</span>
<div class="b" style="left:1216.66px;top:581.3px;width:105.8px;height:108.8px;border:2px solid #f4f4f4;box-sizing:border-box;background:linear-gradient(180deg,#b3b3b3 0,#b3b3b3 50.5%,#b3b3b3 50.5%,#b3b3b3 100%);"></div>
<span class="t" style="left:1261.85px;top:693.6px;font-size:12.6px;line-height:16px;color:#f4f4f4;transform:scaleX(1.1000);">70</span>
<div class="b" style="left:1339.14px;top:581.3px;width:105.8px;height:108.8px;border:2px solid #f4f4f4;box-sizing:border-box;background:linear-gradient(180deg,#cccccc 0,#cccccc 50.5%,#cccccc 50.5%,#cccccc 100%);"></div>
<span class="t" style="left:1384.33px;top:693.6px;font-size:12.6px;line-height:16px;color:#f4f4f4;transform:scaleX(1.1000);">80</span>
<div class="b" style="left:1461.62px;top:581.3px;width:105.8px;height:108.8px;border:2px solid #f4f4f4;box-sizing:border-box;background:linear-gradient(180deg,#e6e6e6 0,#e6e6e6 50.5%,#e6e6e6 50.5%,#e6e6e6 100%);"></div>
<span class="t" style="left:1506.81px;top:693.6px;font-size:12.6px;line-height:16px;color:#f4f4f4;transform:scaleX(1.1000);">90</span>
<div class="b" style="left:1584.1px;top:581.3px;width:105.8px;height:108.8px;border:2px solid #f4f4f4;box-sizing:border-box;background:linear-gradient(180deg,#ffffff 0,#ffffff 50.5%,#ffffff 50.5%,#ffffff 100%);"></div>
<span class="t" style="left:1625.44px;top:693.6px;font-size:12.6px;line-height:16px;color:#f4f4f4;transform:scaleX(1.1000);">100</span>
<span class="t" style="left:341px;top:623.500px;font-size:12.600px;line-height:14px;color:#f4f4f4;transform-origin:0 0;transform:rotate(-90deg);width:37px;text-align:center;letter-spacing:.25px">Actual</span>
<span class="t" style="left:341px;top:685px;font-size:12.600px;line-height:14px;color:#f4f4f4;transform-origin:0 0;transform:rotate(-90deg);width:37px;text-align:center;letter-spacing:.25px">Target</span>
<span class="t" style="left:92px;top:741.9px;font-size:29.6px;line-height:36px;color:#f4f4f4;transform:scaleX(1.0705);">Current Reading</span>
<span class="t" style="left:92px;top:791.3px;font-size:25.3px;line-height:31px;color:#f4f4f4;transform:scaleX(1.0327);">x: 0,3127</span>
<span class="t" style="left:92px;top:834.9px;font-size:25.3px;line-height:31px;color:#f4f4f4;transform:scaleX(1.0327);">y: 0,3287</span>
<span class="t" style="left:92px;top:878.3px;font-size:25.3px;line-height:31px;color:#f4f4f4;transform:scaleX(1.0396);">fL: 102,09</span>
<span class="t" style="left:92px;top:921.8px;font-size:25.3px;line-height:31px;color:#f4f4f4;transform:scaleX(1.0796);">cd/m²: 349,77</span>
<div class="b" style="left:424.7px;top:737.1px;width:311.4px;height:230.9px;background:#333;border:7.300px solid #e9e9e9;box-sizing:border-box;"></div>
<div class="b" style="left:471.5px;top:747.5px;width:254.8px;height:183.6px;background:radial-gradient(ellipse 62% 70% at 49.6% 49.6%,rgba(255,255,255,1) 0,rgba(255,255,255,.82) 18%,rgba(255,255,255,.45) 45%,rgba(255,255,255,.12) 75%,rgba(255,255,255,0) 100%),conic-gradient(from 0deg at 49.6% 49.6%,#c4ffc8 0deg,#e4ffc6 25deg,#ffffcc 42deg,#ffe6b8 60deg,#ffc8ae 78deg,#ffb0b0 95deg,#ff9cb4 115deg,#ff92c0 128deg,#ffa6dc 150deg,#ffc4fa 175deg,#ecc8ff 198deg,#c8c8ff 215deg,#a6c8ff 232deg,#a0dcff 250deg,#a2f6fc 270deg,#9cffe2 292deg,#94ffc0 312deg,#a8ffbc 338deg,#c4ffc8 360deg);border:1px solid rgba(125,125,125,.75);box-sizing:border-box;"></div>
<svg class="b" style="left:430px;top:744px" width="300" height="218" viewBox="430 744 300 218"><clipPath id="cieclip"><rect x="471.5" y="747.5" width="254.8" height="183.6"/></clipPath><path clip-path="url(#cieclip)" d="M502.900 932.500L560 891.500 615 853.300 670 815.600 727.500 777.200" fill="none" stroke="#000" stroke-width="3.600"/><rect x="590.400" y="832.200" width="14" height="14" fill="none" stroke="#111" stroke-width="1.800"/><circle cx="592.800" cy="841.500" r="4.600" fill="#7a7a7a" stroke="#111" stroke-width="1.400"/><circle cx="601" cy="833.600" r="4.800" fill="#e8e8e8" stroke="#111" stroke-width="1.400"/><circle cx="598" cy="841.400" r="4.600" fill="#fff" stroke="#111" stroke-width="1.400"/><circle cx="615.700" cy="835.200" r="5.200" fill="#151515"/><rect x="465.300" y="762.2" width="6.200" height="1.600" fill="#d8d8d8"/><rect x="465.300" y="799.1" width="6.200" height="1.600" fill="#d8d8d8"/><rect x="465.300" y="836.0" width="6.200" height="1.600" fill="#d8d8d8"/><rect x="465.300" y="872.7" width="6.200" height="1.600" fill="#d8d8d8"/><rect x="465.300" y="909.2" width="6.200" height="1.600" fill="#d8d8d8"/><rect x="481.2" y="931" width="1.600" height="5.500" fill="#d8d8d8"/><rect x="531.8" y="931" width="1.600" height="5.500" fill="#d8d8d8"/><rect x="582.6" y="931" width="1.600" height="5.500" fill="#d8d8d8"/><rect x="633.4" y="931" width="1.600" height="5.500" fill="#d8d8d8"/><rect x="684.2" y="931" width="1.600" height="5.500" fill="#d8d8d8"/></svg>
<span class="t" style="left:434.3px;top:752.9px;font-size:15.7px;line-height:19px;color:#e4e4e4;transform:scaleX(1.0145);">0,35</span>
<span class="t" style="left:434.3px;top:789.8px;font-size:15.7px;line-height:19px;color:#e4e4e4;transform:scaleX(1.0145);">0,34</span>
<span class="t" style="left:434.3px;top:826.7px;font-size:15.7px;line-height:19px;color:#e4e4e4;transform:scaleX(1.0145);">0,33</span>
<span class="t" style="left:434.3px;top:863.4px;font-size:15.7px;line-height:19px;color:#e4e4e4;transform:scaleX(1.0145);">0,32</span>
<span class="t" style="left:434.3px;top:899.9px;font-size:15.7px;line-height:19px;color:#e4e4e4;transform:scaleX(1.0145);">0,31</span>
<span class="t" style="left:466.5px;top:938.7px;font-size:15.7px;line-height:19px;color:#e4e4e4;transform:scaleX(1.0145);">0,29</span>
<span class="t" style="left:521.35px;top:938.7px;font-size:15.7px;line-height:19px;color:#e4e4e4;transform:scaleX(1.0309);">0,3</span>
<span class="t" style="left:567.9px;top:938.7px;font-size:15.7px;line-height:19px;color:#e4e4e4;transform:scaleX(1.0145);">0,31</span>
<span class="t" style="left:618.7px;top:938.7px;font-size:15.7px;line-height:19px;color:#e4e4e4;transform:scaleX(1.0145);">0,32</span>
<span class="t" style="left:669.5px;top:938.7px;font-size:15.7px;line-height:19px;color:#e4e4e4;transform:scaleX(1.0145);">0,33</span>
<div class="b" style="left:745px;top:723.8px;width:933.4px;height:30px;background:linear-gradient(180deg,#333 0,#2b2b2b 40%,#141414 46%,#0c0c0c 100%);"></div>
<div class="b" style="left:745px;top:723.8px;width:14.3px;height:30px;background:#000;"></div>
<span class="t" style="left:902.3px;top:729.6px;font-size:16.3px;line-height:20px;color:#fff;">0</span>
<span class="t" style="left:982.3px;top:729.6px;font-size:16.3px;line-height:20px;color:#fff;">10</span>
<span class="t" style="left:1052.3px;top:729.6px;font-size:16.3px;line-height:20px;color:#fff;">20</span>
<span class="t" style="left:1122.3px;top:729.6px;font-size:16.3px;line-height:20px;color:#fff;">30</span>
<span class="t" style="left:1192.3px;top:729.6px;font-size:16.3px;line-height:20px;color:#fff;">40</span>
<span class="t" style="left:1262.5px;top:729.6px;font-size:16.3px;line-height:20px;color:#fff;">50</span>
<span class="t" style="left:1332.7px;top:729.6px;font-size:16.3px;line-height:20px;color:#fff;">60</span>
<span class="t" style="left:1403px;top:729.6px;font-size:16.3px;line-height:20px;color:#fff;">70</span>
<span class="t" style="left:1473px;top:729.6px;font-size:16.3px;line-height:20px;color:#fff;">80</span>
<span class="t" style="left:1543.2px;top:729.6px;font-size:16.3px;line-height:20px;color:#fff;">90</span>
<span class="t" style="left:1613.4px;top:729.6px;font-size:16.3px;line-height:20px;color:#fff;">100</span>
<div class="b" style="left:759.3px;top:755px;width:919.1px;height:26.3px;background:#444;"></div>
<div class="b" style="left:745px;top:755px;width:14.3px;height:26.3px;background:linear-gradient(180deg,#1c1c1c,#333);"></div>
<span class="t" style="left:763.6px;top:758.3px;font-size:16.3px;line-height:20px;color:#fff;transform:scaleX(0.9358);">x: CIE31</span>
<span class="t" style="left:902.3px;top:758.3px;font-size:16.3px;line-height:20px;color:#fff;transform:scaleX(1.0220);">0,29</span>
<span class="t" style="left:982.3px;top:758.3px;font-size:16.3px;line-height:20px;color:#fff;transform:scaleX(1.0220);">0,32</span>
<span class="t" style="left:1052.3px;top:758.3px;font-size:16.3px;line-height:20px;color:#fff;transform:scaleX(1.0220);">0,31</span>
<span class="t" style="left:1122.3px;top:758.3px;font-size:16.3px;line-height:20px;color:#fff;transform:scaleX(1.0220);">0,31</span>
<span class="t" style="left:1192.3px;top:758.3px;font-size:16.3px;line-height:20px;color:#fff;transform:scaleX(1.0220);">0,31</span>
<span class="t" style="left:1262.5px;top:758.3px;font-size:16.3px;line-height:20px;color:#fff;transform:scaleX(1.0220);">0,31</span>
<span class="t" style="left:1332.7px;top:758.3px;font-size:16.3px;line-height:20px;color:#fff;transform:scaleX(1.0220);">0,31</span>
<span class="t" style="left:1403px;top:758.3px;font-size:16.3px;line-height:20px;color:#fff;transform:scaleX(1.0220);">0,31</span>
<span class="t" style="left:1473px;top:758.3px;font-size:16.3px;line-height:20px;color:#fff;transform:scaleX(1.0220);">0,31</span>
<span class="t" style="left:1543.2px;top:758.3px;font-size:16.3px;line-height:20px;color:#fff;transform:scaleX(1.0220);">0,31</span>
<span class="t" style="left:1613.4px;top:758.3px;font-size:16.3px;line-height:20px;color:#fff;transform:scaleX(1.0220);">0,31</span>
<div class="b" style="left:759.3px;top:782.38px;width:919.1px;height:26.3px;background:#777;"></div>
<div class="b" style="left:745px;top:782.38px;width:14.3px;height:26.3px;background:linear-gradient(180deg,#1c1c1c,#333);"></div>
<span class="t" style="left:763.6px;top:785.68px;font-size:16.3px;line-height:20px;color:#f2f2f2;transform:scaleX(0.9358);">y: CIE31</span>
<span class="t" style="left:902.3px;top:785.68px;font-size:16.3px;line-height:20px;color:#f2f2f2;transform:scaleX(1.0220);">0,26</span>
<span class="t" style="left:982.3px;top:785.68px;font-size:16.3px;line-height:20px;color:#f2f2f2;transform:scaleX(1.0220);">0,33</span>
<span class="t" style="left:1052.3px;top:785.68px;font-size:16.3px;line-height:20px;color:#f2f2f2;transform:scaleX(1.0220);">0,33</span>
<span class="t" style="left:1122.3px;top:785.68px;font-size:16.3px;line-height:20px;color:#f2f2f2;transform:scaleX(1.0220);">0,33</span>
<span class="t" style="left:1192.3px;top:785.68px;font-size:16.3px;line-height:20px;color:#f2f2f2;transform:scaleX(1.0220);">0,33</span>
<span class="t" style="left:1262.5px;top:785.68px;font-size:16.3px;line-height:20px;color:#f2f2f2;transform:scaleX(1.0220);">0,33</span>
<span class="t" style="left:1332.7px;top:785.68px;font-size:16.3px;line-height:20px;color:#f2f2f2;transform:scaleX(1.0220);">0,33</span>
<span class="t" style="left:1403px;top:785.68px;font-size:16.3px;line-height:20px;color:#f2f2f2;transform:scaleX(1.0220);">0,33</span>
<span class="t" style="left:1473px;top:785.68px;font-size:16.3px;line-height:20px;color:#f2f2f2;transform:scaleX(1.0220);">0,33</span>
<span class="t" style="left:1543.2px;top:785.68px;font-size:16.3px;line-height:20px;color:#f2f2f2;transform:scaleX(1.0220);">0,33</span>
<span class="t" style="left:1613.4px;top:785.68px;font-size:16.3px;line-height:20px;color:#f2f2f2;transform:scaleX(1.0220);">0,33</span>
<div class="b" style="left:759.3px;top:809.76px;width:919.1px;height:26.3px;background:#444;"></div>
<div class="b" style="left:745px;top:809.76px;width:14.3px;height:26.3px;background:linear-gradient(180deg,#1c1c1c,#333);"></div>
<span class="t" style="left:763.6px;top:813.06px;font-size:16.3px;line-height:20px;color:#fff;">Y</span>
<span class="t" style="left:902.3px;top:813.06px;font-size:16.3px;line-height:20px;color:#fff;transform:scaleX(1.0220);">0,22</span>
<span class="t" style="left:982.3px;top:813.06px;font-size:16.3px;line-height:20px;color:#fff;transform:scaleX(1.0220);">2,57</span>
<span class="t" style="left:1052.3px;top:813.06px;font-size:16.3px;line-height:20px;color:#fff;transform:scaleX(1.0220);">10,27</span>
<span class="t" style="left:1122.3px;top:813.06px;font-size:16.3px;line-height:20px;color:#fff;transform:scaleX(1.0220);">24,52</span>
<span class="t" style="left:1192.3px;top:813.06px;font-size:16.3px;line-height:20px;color:#fff;transform:scaleX(1.0220);">46,34</span>
<span class="t" style="left:1262.5px;top:813.06px;font-size:16.3px;line-height:20px;color:#fff;transform:scaleX(1.0220);">76,71</span>
<span class="t" style="left:1332.7px;top:813.06px;font-size:16.3px;line-height:20px;color:#fff;transform:scaleX(1.0220);">112,83</span>
<span class="t" style="left:1403px;top:813.06px;font-size:16.3px;line-height:20px;color:#fff;transform:scaleX(1.0220);">158,76</span>
<span class="t" style="left:1473px;top:813.06px;font-size:16.3px;line-height:20px;color:#fff;transform:scaleX(1.0220);">214,34</span>
<span class="t" style="left:1543.2px;top:813.06px;font-size:16.3px;line-height:20px;color:#fff;transform:scaleX(1.0220);">277,56</span>
<span class="t" style="left:1613.4px;top:813.06px;font-size:16.3px;line-height:20px;color:#fff;transform:scaleX(1.0220);">349,77</span>
<div class="b" style="left:759.3px;top:837.14px;width:919.1px;height:26.3px;background:#777;"></div>
<div class="b" style="left:745px;top:837.14px;width:14.3px;height:26.3px;background:linear-gradient(180deg,#1c1c1c,#333);"></div>
<span class="t" style="left:763.6px;top:840.44px;font-size:16.3px;line-height:20px;color:#f2f2f2;transform:scaleX(1.0147);">Target Y</span>
<span class="t" style="left:902.3px;top:840.44px;font-size:16.3px;line-height:20px;color:#f2f2f2;transform:scaleX(1.0220);">0,00</span>
<span class="t" style="left:982.3px;top:840.44px;font-size:16.3px;line-height:20px;color:#f2f2f2;transform:scaleX(1.0220);">3,61</span>
<span class="t" style="left:1052.3px;top:840.44px;font-size:16.3px;line-height:20px;color:#f2f2f2;transform:scaleX(1.0220);">11,58</span>
<span class="t" style="left:1122.3px;top:840.44px;font-size:16.3px;line-height:20px;color:#f2f2f2;transform:scaleX(1.0220);">25,28</span>
<span class="t" style="left:1192.3px;top:840.44px;font-size:16.3px;line-height:20px;color:#f2f2f2;transform:scaleX(1.0220);">46,47</span>
<span class="t" style="left:1262.5px;top:840.44px;font-size:16.3px;line-height:20px;color:#f2f2f2;transform:scaleX(1.0220);">75,50</span>
<span class="t" style="left:1332.7px;top:840.44px;font-size:16.3px;line-height:20px;color:#f2f2f2;transform:scaleX(1.0220);">111,42</span>
<span class="t" style="left:1403px;top:840.44px;font-size:16.3px;line-height:20px;color:#f2f2f2;transform:scaleX(1.0220);">155,72</span>
<span class="t" style="left:1473px;top:840.44px;font-size:16.3px;line-height:20px;color:#f2f2f2;transform:scaleX(1.0220);">211,20</span>
<span class="t" style="left:1543.2px;top:840.44px;font-size:16.3px;line-height:20px;color:#f2f2f2;transform:scaleX(1.0220);">276,77</span>
<span class="t" style="left:1613.4px;top:840.44px;font-size:16.3px;line-height:20px;color:#f2f2f2;transform:scaleX(1.0220);">349,77</span>
<div class="b" style="left:759.3px;top:864.52px;width:919.1px;height:26.3px;background:#444;"></div>
<div class="b" style="left:745px;top:864.52px;width:14.3px;height:26.3px;background:linear-gradient(180deg,#1c1c1c,#333);"></div>
<span class="t" style="left:763.6px;top:867.82px;font-size:16.3px;line-height:20px;color:#fff;transform:scaleX(1.0501);">Gamma Log/Log</span>
<span class="t" style="left:902.3px;top:867.82px;font-size:16.3px;line-height:20px;color:#fff;transform:scaleX(1.0220);">1,28</span>
<span class="t" style="left:982.3px;top:867.82px;font-size:16.3px;line-height:20px;color:#fff;transform:scaleX(1.0220);">2,15</span>
<span class="t" style="left:1052.3px;top:867.82px;font-size:16.3px;line-height:20px;color:#fff;transform:scaleX(1.0220);">2,19</span>
<span class="t" style="left:1122.3px;top:867.82px;font-size:16.3px;line-height:20px;color:#fff;transform:scaleX(1.0220);">2,20</span>
<span class="t" style="left:1192.3px;top:867.82px;font-size:16.3px;line-height:20px;color:#fff;transform:scaleX(1.0220);">2,21</span>
<span class="t" style="left:1262.5px;top:867.82px;font-size:16.3px;line-height:20px;color:#fff;transform:scaleX(1.0220);">2,20</span>
<span class="t" style="left:1332.7px;top:867.82px;font-size:16.3px;line-height:20px;color:#fff;transform:scaleX(1.0220);">2,21</span>
<span class="t" style="left:1403px;top:867.82px;font-size:16.3px;line-height:20px;color:#fff;transform:scaleX(1.0220);">2,20</span>
<span class="t" style="left:1473px;top:867.82px;font-size:16.3px;line-height:20px;color:#fff;transform:scaleX(1.0220);">2,19</span>
<span class="t" style="left:1543.2px;top:867.82px;font-size:16.3px;line-height:20px;color:#fff;transform:scaleX(1.0220);">2,24</span>
<span class="t" style="left:1613.4px;top:867.82px;font-size:16.3px;line-height:20px;color:#fff;transform:scaleX(1.0220);">2,27</span>
<div class="b" style="left:759.3px;top:891.9px;width:919.1px;height:26.3px;background:#777;"></div>
<div class="b" style="left:745px;top:891.9px;width:14.3px;height:26.3px;background:linear-gradient(180deg,#1c1c1c,#333);"></div>
<span class="t" style="left:763.6px;top:895.2px;font-size:16.3px;line-height:20px;color:#f2f2f2;transform:scaleX(0.8806);">CCT</span>
<span class="t" style="left:902.3px;top:895.2px;font-size:16.3px;line-height:20px;color:#f2f2f2;transform:scaleX(1.0220);">11290,00</span>
<span class="t" style="left:982.3px;top:895.2px;font-size:16.3px;line-height:20px;color:#f2f2f2;transform:scaleX(1.0220);">6316,00</span>
<span class="t" style="left:1052.3px;top:895.2px;font-size:16.3px;line-height:20px;color:#f2f2f2;transform:scaleX(1.0220);">6549,00</span>
<span class="t" style="left:1122.3px;top:895.2px;font-size:16.3px;line-height:20px;color:#f2f2f2;transform:scaleX(1.0220);">6492,00</span>
<span class="t" style="left:1192.3px;top:895.2px;font-size:16.3px;line-height:20px;color:#f2f2f2;transform:scaleX(1.0220);">6446,00</span>
<span class="t" style="left:1262.5px;top:895.2px;font-size:16.3px;line-height:20px;color:#f2f2f2;transform:scaleX(1.0220);">6460,00</span>
<span class="t" style="left:1332.7px;top:895.2px;font-size:16.3px;line-height:20px;color:#f2f2f2;transform:scaleX(1.0220);">6502,00</span>
<span class="t" style="left:1403px;top:895.2px;font-size:16.3px;line-height:20px;color:#f2f2f2;transform:scaleX(1.0220);">6471,00</span>
<span class="t" style="left:1473px;top:895.2px;font-size:16.3px;line-height:20px;color:#f2f2f2;transform:scaleX(1.0220);">6480,00</span>
<span class="t" style="left:1543.2px;top:895.2px;font-size:16.3px;line-height:20px;color:#f2f2f2;transform:scaleX(1.0220);">6467,00</span>
<span class="t" style="left:1613.4px;top:895.2px;font-size:16.3px;line-height:20px;color:#f2f2f2;transform:scaleX(1.0220);">6506,00</span>
<div class="b" style="left:759.3px;top:919.28px;width:919.1px;height:26.3px;background:#444;"></div>
<div class="b" style="left:745px;top:919.28px;width:14.3px;height:26.3px;background:linear-gradient(180deg,#1c1c1c,#333);"></div>
<span class="t" style="left:763.6px;top:922.58px;font-size:16.3px;line-height:20px;color:#fff;transform:scaleX(0.9880);">ΔE 2000</span>
<span class="t" style="left:902.3px;top:922.58px;font-size:16.3px;line-height:20px;color:#fff;transform:scaleX(1.0220);">0,85</span>
<span class="t" style="left:982.3px;top:922.58px;font-size:16.3px;line-height:20px;color:#fff;transform:scaleX(1.0220);">1,66</span>
<span class="t" style="left:1052.3px;top:922.58px;font-size:16.3px;line-height:20px;color:#fff;transform:scaleX(1.0220);">1,02</span>
<span class="t" style="left:1122.3px;top:922.58px;font-size:16.3px;line-height:20px;color:#fff;transform:scaleX(1.0220);">0,39</span>
<span class="t" style="left:1192.3px;top:922.58px;font-size:16.3px;line-height:20px;color:#fff;transform:scaleX(1.0220);">0,28</span>
<span class="t" style="left:1262.5px;top:922.58px;font-size:16.3px;line-height:20px;color:#fff;transform:scaleX(1.0220);">0,53</span>
<span class="t" style="left:1332.7px;top:922.58px;font-size:16.3px;line-height:20px;color:#fff;transform:scaleX(1.0220);">0,45</span>
<span class="t" style="left:1403px;top:922.58px;font-size:16.3px;line-height:20px;color:#fff;transform:scaleX(1.0220);">0,73</span>
<span class="t" style="left:1473px;top:922.58px;font-size:16.3px;line-height:20px;color:#fff;transform:scaleX(1.0220);">0,57</span>
<span class="t" style="left:1543.2px;top:922.58px;font-size:16.3px;line-height:20px;color:#fff;transform:scaleX(1.0220);">0,76</span>
<span class="t" style="left:1613.4px;top:922.58px;font-size:16.3px;line-height:20px;color:#fff;transform:scaleX(1.0220);">0,28</span>
<!-- bottom bar -->
<div class="b" style="left:1.4px;top:968.9px;width:139.7px;height:69px;border-radius:5px;background:linear-gradient(180deg,#a2a2a2 0,#8e8e8e 6%,#7e7e7e 35%,#686868 70%,#5a5a5a 100%);box-shadow:inset 0 1px 0 rgba(255,255,255,.25),inset 1px 0 0 rgba(255,255,255,.10),inset -1px 0 0 rgba(0,0,0,.15);"></div>
<div class="b" style="left:6.75px;top:974.6px;width:128.3px;height:40.5px;border-radius:4px;background:#000000;box-shadow:inset 0 1px 2px rgba(0,0,0,.35),0 1px 0 rgba(255,255,255,.12);"></div>
<span class="t" style="left:68px;top:1022.5px;font-size:10.8px;line-height:13px;color:#262626;font-weight:bold;">0</span>
<div class="b" style="left:143.28px;top:968.9px;width:139.7px;height:69px;border-radius:5px;background:linear-gradient(180deg,#a2a2a2 0,#8e8e8e 6%,#7e7e7e 35%,#686868 70%,#5a5a5a 100%);box-shadow:inset 0 1px 0 rgba(255,255,255,.25),inset 1px 0 0 rgba(255,255,255,.10),inset -1px 0 0 rgba(0,0,0,.15);"></div>
<div class="b" style="left:148.63px;top:974.6px;width:128.3px;height:40.5px;border-radius:4px;background:#1a1a1a;box-shadow:inset 0 1px 2px rgba(0,0,0,.35),0 1px 0 rgba(255,255,255,.12);"></div>
<span class="t" style="left:206.87px;top:1022.5px;font-size:10.8px;line-height:13px;color:#262626;font-weight:bold;">10</span>
<div class="b" style="left:285.16px;top:968.9px;width:139.7px;height:69px;border-radius:5px;background:linear-gradient(180deg,#a2a2a2 0,#8e8e8e 6%,#7e7e7e 35%,#686868 70%,#5a5a5a 100%);box-shadow:inset 0 1px 0 rgba(255,255,255,.25),inset 1px 0 0 rgba(255,255,255,.10),inset -1px 0 0 rgba(0,0,0,.15);"></div>
<div class="b" style="left:290.51px;top:974.6px;width:128.3px;height:40.5px;border-radius:4px;background:#333333;box-shadow:inset 0 1px 2px rgba(0,0,0,.35),0 1px 0 rgba(255,255,255,.12);"></div>
<span class="t" style="left:348.75px;top:1022.5px;font-size:10.8px;line-height:13px;color:#262626;font-weight:bold;">20</span>
<div class="b" style="left:427.04px;top:968.9px;width:139.7px;height:69px;border-radius:5px;background:linear-gradient(180deg,#a2a2a2 0,#8e8e8e 6%,#7e7e7e 35%,#686868 70%,#5a5a5a 100%);box-shadow:inset 0 1px 0 rgba(255,255,255,.25),inset 1px 0 0 rgba(255,255,255,.10),inset -1px 0 0 rgba(0,0,0,.15);"></div>
<div class="b" style="left:432.39px;top:974.6px;width:128.3px;height:40.5px;border-radius:4px;background:#4d4d4d;box-shadow:inset 0 1px 2px rgba(0,0,0,.35),0 1px 0 rgba(255,255,255,.12);"></div>
<span class="t" style="left:490.63px;top:1022.5px;font-size:10.8px;line-height:13px;color:#262626;font-weight:bold;">30</span>
<div class="b" style="left:568.92px;top:968.9px;width:139.7px;height:69px;border-radius:5px;background:linear-gradient(180deg,#a2a2a2 0,#8e8e8e 6%,#7e7e7e 35%,#686868 70%,#5a5a5a 100%);box-shadow:inset 0 1px 0 rgba(255,255,255,.25),inset 1px 0 0 rgba(255,255,255,.10),inset -1px 0 0 rgba(0,0,0,.15);"></div>
<div class="b" style="left:574.27px;top:974.6px;width:128.3px;height:40.5px;border-radius:4px;background:#666666;box-shadow:inset 0 1px 2px rgba(0,0,0,.35),0 1px 0 rgba(255,255,255,.12);"></div>
<span class="t" style="left:632.51px;top:1022.5px;font-size:10.8px;line-height:13px;color:#262626;font-weight:bold;">40</span>
<div class="b" style="left:710.8px;top:968.9px;width:139.7px;height:69px;border-radius:5px;background:linear-gradient(180deg,#a2a2a2 0,#8e8e8e 6%,#7e7e7e 35%,#686868 70%,#5a5a5a 100%);box-shadow:inset 0 1px 0 rgba(255,255,255,.25),inset 1px 0 0 rgba(255,255,255,.10),inset -1px 0 0 rgba(0,0,0,.15);"></div>
<div class="b" style="left:716.15px;top:974.6px;width:128.3px;height:40.5px;border-radius:4px;background:#808080;box-shadow:inset 0 1px 2px rgba(0,0,0,.35),0 1px 0 rgba(255,255,255,.12);"></div>
<span class="t" style="left:774.39px;top:1022.5px;font-size:10.8px;line-height:13px;color:#262626;font-weight:bold;">50</span>
<div class="b" style="left:852.68px;top:968.9px;width:139.7px;height:69px;border-radius:5px;background:linear-gradient(180deg,#a2a2a2 0,#8e8e8e 6%,#7e7e7e 35%,#686868 70%,#5a5a5a 100%);box-shadow:inset 0 1px 0 rgba(255,255,255,.25),inset 1px 0 0 rgba(255,255,255,.10),inset -1px 0 0 rgba(0,0,0,.15);"></div>
<div class="b" style="left:858.03px;top:974.6px;width:128.3px;height:40.5px;border-radius:4px;background:#999999;box-shadow:inset 0 1px 2px rgba(0,0,0,.35),0 1px 0 rgba(255,255,255,.12);"></div>
<span class="t" style="left:916.27px;top:1022.5px;font-size:10.8px;line-height:13px;color:#262626;font-weight:bold;">60</span>
<div class="b" style="left:994.56px;top:968.9px;width:139.7px;height:69px;border-radius:5px;background:linear-gradient(180deg,#a2a2a2 0,#8e8e8e 6%,#7e7e7e 35%,#686868 70%,#5a5a5a 100%);box-shadow:inset 0 1px 0 rgba(255,255,255,.25),inset 1px 0 0 rgba(255,255,255,.10),inset -1px 0 0 rgba(0,0,0,.15);"></div>
<div class="b" style="left:999.91px;top:974.6px;width:128.3px;height:40.5px;border-radius:4px;background:#b3b3b3;box-shadow:inset 0 1px 2px rgba(0,0,0,.35),0 1px 0 rgba(255,255,255,.12);"></div>
<span class="t" style="left:1058.15px;top:1022.5px;font-size:10.8px;line-height:13px;color:#262626;font-weight:bold;">70</span>
<div class="b" style="left:1136.44px;top:968.9px;width:139.7px;height:69px;border-radius:5px;background:linear-gradient(180deg,#a2a2a2 0,#8e8e8e 6%,#7e7e7e 35%,#686868 70%,#5a5a5a 100%);box-shadow:inset 0 1px 0 rgba(255,255,255,.25),inset 1px 0 0 rgba(255,255,255,.10),inset -1px 0 0 rgba(0,0,0,.15);"></div>
<div class="b" style="left:1141.79px;top:974.6px;width:128.3px;height:40.5px;border-radius:4px;background:#cccccc;box-shadow:inset 0 1px 2px rgba(0,0,0,.35),0 1px 0 rgba(255,255,255,.12);"></div>
<span class="t" style="left:1200.03px;top:1022.5px;font-size:10.8px;line-height:13px;color:#262626;font-weight:bold;">80</span>
<div class="b" style="left:1278.32px;top:968.9px;width:139.7px;height:69px;border-radius:5px;background:linear-gradient(180deg,#a2a2a2 0,#8e8e8e 6%,#7e7e7e 35%,#686868 70%,#5a5a5a 100%);box-shadow:inset 0 1px 0 rgba(255,255,255,.25),inset 1px 0 0 rgba(255,255,255,.10),inset -1px 0 0 rgba(0,0,0,.15);"></div>
<div class="b" style="left:1283.67px;top:974.6px;width:128.3px;height:40.5px;border-radius:4px;background:#e6e6e6;box-shadow:inset 0 1px 2px rgba(0,0,0,.35),0 1px 0 rgba(255,255,255,.12);"></div>
<span class="t" style="left:1341.91px;top:1022.5px;font-size:10.8px;line-height:13px;color:#262626;font-weight:bold;">90</span>
<div class="b" style="left:1419.6px;top:968.8px;width:141px;height:70.2px;border-radius:6px 6px 0 0;background:linear-gradient(180deg,#1c1c1c,#2c2c2c);"></div>
<div class="b" style="left:1425.55px;top:974.6px;width:128.3px;height:40.5px;border-radius:4px;background:#ffffff;box-shadow:inset 0 1px 2px rgba(0,0,0,.35),0 1px 0 rgba(255,255,255,.12);"></div>
<span class="t" style="left:1480.79px;top:1022.5px;font-size:10.8px;line-height:13px;color:#fff;font-weight:bold;">100</span>
<div class="b" style="left:1563.3px;top:969px;width:53.4px;height:20.4px;border-radius:4px 4px 0 0;background:linear-gradient(180deg,#9a9a9a 0,#848484 50%,#6a6a6a 100%);"></div>
<div class="b" style="left:1582px;top:971.5px;width:16px;height:16px;border-radius:50%;background:linear-gradient(180deg,#626262 0,#7c7c7c 55%,#a0a0a0 100%);box-shadow:0 1px 0 rgba(255,255,255,.22);"></div>
<svg class="b" style="left:1585px;top:976px" width="10" height="6" viewBox="0 0 10 6"><path d="M.2 5h9.600L5 .4z" fill="#2c2c2c"/></svg>
<div class="b" style="left:1563.3px;top:990.6px;width:53.4px;height:47.4px;border-radius:0 0 4px 4px;background:linear-gradient(180deg,#8a8a8a 0,#767676 50%,#626262 100%);"></div>
<div class="b" style="left:1573.3px;top:997px;width:34px;height:34px;border-radius:5px;border:3px solid #1e1e1e;background:linear-gradient(180deg,#9c9c9c 0,#929292 48%,#7a7a7a 52%,#848484 100%);box-sizing:border-box;box-shadow:0 0 0 1px rgba(255,255,255,.12);"></div>
<div class="b" style="left:1582.7px;top:1006.4px;width:15.8px;height:15.2px;background:linear-gradient(180deg,#222 0,#111 45%,#000 50%);"></div>
<div class="b" style="left:1618.9px;top:969px;width:50.8px;height:33.4px;background:linear-gradient(180deg,#a0a0a0 0,#8a8a8a 45%,#6c6c6c 100%);box-shadow:inset 1px 0 0 rgba(255,255,255,.12);border-radius:4px 0 0 0;"></div>
<div class="b" style="left:1633.3px;top:974.6px;width:22px;height:22px;border-radius:50%;background:linear-gradient(180deg,#626262 0,#7c7c7c 55%,#a0a0a0 100%);box-shadow:0 1px 0 rgba(255,255,255,.22);"></div>
<div class="b" style="left:1670.9px;top:969px;width:49.7px;height:33.4px;background:linear-gradient(180deg,#a0a0a0 0,#8a8a8a 45%,#6c6c6c 100%);box-shadow:inset 1px 0 0 rgba(255,255,255,.12);"></div>
<div class="b" style="left:1684.75px;top:974.6px;width:22px;height:22px;border-radius:50%;background:linear-gradient(180deg,#626262 0,#7c7c7c 55%,#a0a0a0 100%);box-shadow:0 1px 0 rgba(255,255,255,.22);"></div>
<div class="b" style="left:1721.8px;top:969px;width:49.4px;height:33.4px;background:linear-gradient(180deg,#a0a0a0 0,#8a8a8a 45%,#6c6c6c 100%);box-shadow:inset 1px 0 0 rgba(255,255,255,.12);"></div>
<div class="b" style="left:1735.5px;top:974.6px;width:22px;height:22px;border-radius:50%;background:linear-gradient(180deg,#626262 0,#7c7c7c 55%,#a0a0a0 100%);box-shadow:0 1px 0 rgba(255,255,255,.22);"></div>
<div class="b" style="left:1772.4px;top:969px;width:49.7px;height:33.4px;background:linear-gradient(180deg,#a0a0a0 0,#8a8a8a 45%,#6c6c6c 100%);box-shadow:inset 1px 0 0 rgba(255,255,255,.12);"></div>
<div class="b" style="left:1786.25px;top:974.6px;width:22px;height:22px;border-radius:50%;background:linear-gradient(180deg,#626262 0,#7c7c7c 55%,#a0a0a0 100%);box-shadow:0 1px 0 rgba(255,255,255,.22);"></div>
<div class="b" style="left:1823.3px;top:969px;width:49.5px;height:33.4px;background:linear-gradient(180deg,#a0a0a0 0,#8a8a8a 45%,#6c6c6c 100%);box-shadow:inset 1px 0 0 rgba(255,255,255,.12);"></div>
<div class="b" style="left:1837.05px;top:974.6px;width:22px;height:22px;border-radius:50%;background:linear-gradient(180deg,#626262 0,#7c7c7c 55%,#a0a0a0 100%);box-shadow:0 1px 0 rgba(255,255,255,.22);"></div>
<div class="b" style="left:1640.1px;top:981.4px;width:8.4px;height:8.4px;background:#2e2e2e;border-radius:1px;"></div>
<svg class="b" style="left:1692.2px;top:980px" width="10" height="12" viewBox="0 0 10 12"><path d="M.8.600L9.600 6 .8 11.400z" fill="#2e2e2e"/></svg>
<svg class="b" style="left:1739.5px;top:979.500px" width="14" height="13" viewBox="0 0 14 13"><path d="M4 1H1.500v11H4M10 1h2.500v11H10" fill="none" stroke="#2e2e2e" stroke-width="2.300"/><circle cx="5.300" cy="6.500" r="1" fill="#2e2e2e"/><circle cx="8.700" cy="6.500" r="1" fill="#2e2e2e"/></svg>
<svg class="b" style="left:1789.2px;top:981.200px" width="16" height="9" viewBox="0 0 16 9"><path d="M8 4.500C6.600 2.600 5.400 1.700 4 1.700a2.800 2.800 0 0 0 0 5.600C5.400 7.300 6.600 6.400 8 4.500s2.600-2.800 4-2.800a2.800 2.800 0 0 1 0 5.600C10.600 7.300 9.400 6.400 8 4.500z" fill="none" stroke="#2e2e2e" stroke-width="1.900"/></svg>
<svg class="b" style="left:1840.6px;top:978.300px" width="15" height="15" viewBox="0 0 15 15"><path d="M12.300 5.800A5.200 5.200 0 0 0 3.300 4.200" fill="none" stroke="#2e2e2e" stroke-width="2.400"/><path d="M2.700 9.200A5.200 5.200 0 0 0 11.700 10.800" fill="none" stroke="#2e2e2e" stroke-width="2.400"/><path d="M9.200 1.200L14 1.700 12.700 7zM5.800 13.800L1 13.300 2.300 8z" fill="#2e2e2e"/></svg>
<div class="b" style="left:1874px;top:969px;width:46px;height:33.4px;background:linear-gradient(180deg,#2a2a2a,#333);"></div>
<div class="b" style="left:1888.7px;top:975px;width:22px;height:22px;border-radius:50%;background:linear-gradient(180deg,#272727 0,#303030 60%,#3e3e3e 100%);"></div>
<div class="b" style="left:1618.9px;top:1004.3px;width:153px;height:34.7px;background:linear-gradient(180deg,#9e9e9e 0,#8e8e8e 40%,#7c7c7c 100%);box-shadow:inset 0 1px 0 rgba(255,255,255,.22);"></div>
<div class="b" style="left:1773.2px;top:1004.3px;width:146.8px;height:34.7px;background:linear-gradient(180deg,#9e9e9e 0,#8e8e8e 40%,#7c7c7c 100%);box-shadow:inset 0 1px 0 rgba(255,255,255,.22);"></div>
<div class="b" style="left:1642.3px;top:1010.4px;width:22px;height:22px;border-radius:50%;background:linear-gradient(180deg,#626262 0,#7c7c7c 55%,#a0a0a0 100%);box-shadow:0 1px 0 rgba(255,255,255,.22);"></div>
<div class="b" style="left:1884.1px;top:1010.4px;width:22px;height:22px;border-radius:50%;background:linear-gradient(180deg,#626262 0,#7c7c7c 55%,#a0a0a0 100%);box-shadow:0 1px 0 rgba(255,255,255,.22);"></div>
<svg class="b" style="left:1647px;top:1014.800px" width="13" height="14" viewBox="0 0 13 14"><path d="M6 1L1.500 7 6 13M11.500 1L7 7l4.500 6" fill="none" stroke="#333" stroke-width="1.900"/></svg>
<svg class="b" style="left:1888.200px;top:1014.800px" width="13" height="14" viewBox="0 0 13 14"><path d="M1.500 1L6 7l-4.500 6M7 1l4.500 6L7 13" fill="none" stroke="#333" stroke-width="1.900"/></svg>
<span class="t" style="left:1683.6px;top:1006.9px;font-size:24.4px;line-height:30px;color:#3a3a3a;transform:scaleX(0.9943);font-weight:bold;text-shadow:0 1px 0 rgba(255,255,255,.15);">Back</span>
<span class="t" style="left:1804px;top:1006.9px;font-size:24.4px;line-height:30px;color:#3a3a3a;transform:scaleX(1.1345);font-weight:bold;text-shadow:0 1px 0 rgba(255,255,255,.15);">Next</span>
</div></body></html>
